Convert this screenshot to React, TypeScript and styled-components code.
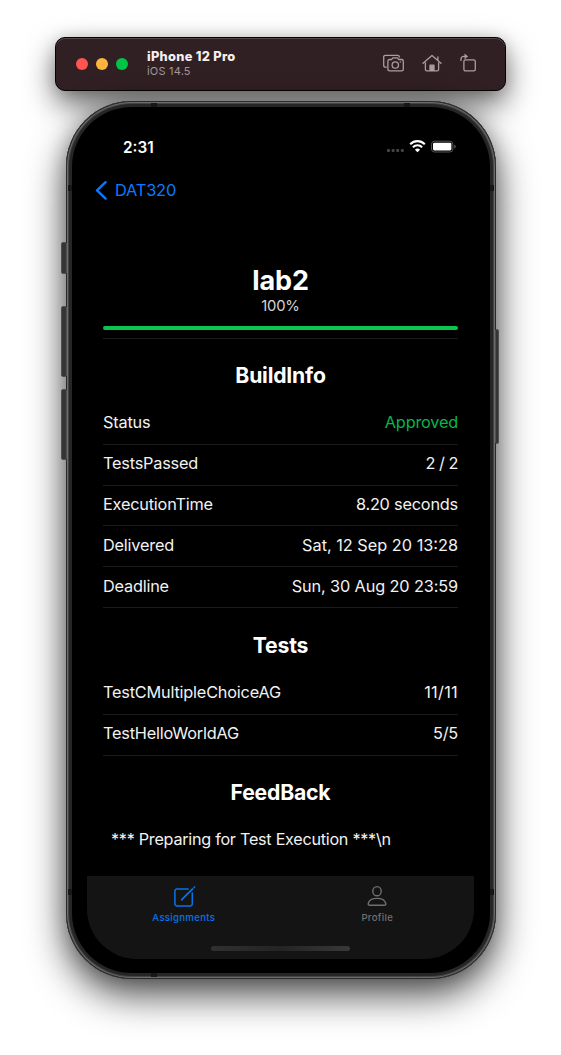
import React from "react";
import styled, { createGlobalStyle } from "styled-components";

const GlobalStyle = createGlobalStyle`
  * { box-sizing: border-box; }
  html, body { margin: 0; background: #fff; }
  body {
    font-family: Inter, "Liberation Sans", sans-serif;
    overflow: hidden;
    -webkit-font-smoothing: antialiased;
  }
`;

const Desktop = styled.div`
  width: 561px;
  height: 1055px;
  padding: 37px 55px 0;
  background: #fff;
  display: flex;
  flex-direction: column;
  gap: 10px;
  overflow: hidden;
`;

const TitleBar = styled.header`
  width: 451px;
  height: 54px;
  padding: 0 27px 0 20px;
  display: flex;
  align-items: center;
  background: #302024;
  border: 1px solid #050304;
  border-radius: 10px;
  box-shadow: inset 0 1px 0 #55484b, 0 13px 30px rgba(0, 0, 0, 0.6), 0 0 14px rgba(0, 0, 0, 0.12);
`;

const Lights = styled.div`
  display: flex;
  gap: 8px;
`;

const Light = styled.span<{ $color: string }>`
  width: 12px;
  height: 12px;
  border-radius: 50%;
  background: ${(p) => p.$color};
`;

const Device = styled.div`
  margin-left: 19px;
  flex: 1;
`;

const DeviceName = styled.div`
  font-size: 12.8px;
  font-weight: 800;
  line-height: 15px;
  letter-spacing: 0.3px;
  color: #f4eff0;
`;

const DeviceOs = styled.div`
  font-size: 11px;
  line-height: 15px;
  letter-spacing: 0.2px;
  color: #a3989a;
`;

const Tools = styled.div`
  display: flex;
  align-items: center;
  gap: 18px;
  padding-bottom: 2px;
`;

const Phone = styled.main`
  position: relative;
  width: 430px;
  height: 878px;
  margin-left: 11px;
  padding: 20px 22px 20px 21px;
  border-radius: 66px;
  background: #000;
  box-shadow: inset 0 0 0 1px #2a2a2a, inset 0 0 0 2px #6c6c6c, inset 0 0 0 3px #444,
    inset 0 0 0 6px #262626, 0 16px 38px rgba(0, 0, 0, 0.7), 0 0 20px rgba(0, 0, 0, 0.2);
`;

const SideButton = styled.span<{ $top: number; $height: number; $right?: boolean }>`
  position: absolute;
  top: ${(p) => p.$top}px;
  ${(p) => (p.$right ? "right: -3px;" : "left: -5px;")}
  width: ${(p) => (p.$right ? 4 : 6)}px;
  height: ${(p) => p.$height}px;
  background: #353535;
  border: 1px solid #505050;
  border-radius: 2px;
`;

const AntennaBand = styled.span<{ $edge: "left" | "right" | "top" | "bottom"; $at: number }>`
  position: absolute;
  ${(p) => p.$edge}: 2px;
  ${(p) =>
    p.$edge === "left" || p.$edge === "right"
      ? `top: ${p.$at}px; width: 4px; height: 6px;`
      : `left: ${p.$at}px; width: 6px; height: 4px;`}
  background: #171717;
`;

const Screen = styled.div`
  width: 387px;
  height: 838px;
  border-radius: 0 0 50px 50px;
  overflow: hidden;
  display: flex;
  flex-direction: column;
`;

const StatusBar = styled.div`
  height: 50px;
  padding: 1px 18px 0 36px;
  display: flex;
  align-items: center;
  justify-content: space-between;
`;

const Clock = styled.span`
  padding-top: 1px;
  font-size: 15.3px;
  font-weight: 600;
  letter-spacing: 0;
  color: #fff;
`;

const NavBar = styled.nav`
  height: 38px;
  padding: 0 0 0 8px;
  display: flex;
  align-items: center;
  gap: 7px;
  color: #0a7aff;
  font-size: 16.4px;
  letter-spacing: -0.2px;
`;

const Content = styled.section`
  flex: 1;
  padding: 55px 16px 0;
  color: #f2f2f2;
`;

const Title = styled.h1`
  margin: 0;
  height: 33px;
  line-height: 33px;
  font-size: 27px;
  font-weight: 700;
  letter-spacing: -0.1px;
  text-align: center;
  color: #fff;
`;

const Percent = styled.div`
  height: 19px;
  line-height: 19px;
  font-size: 14.8px;
  letter-spacing: -0.2px;
  text-align: center;
  color: #d4d4d4;
`;

const Progress = styled.div`
  height: 4px;
  margin-top: 10px;
  border-radius: 2px;
  background: #08c650;
`;

const Divider = styled.div`
  height: 1px;
  margin-top: 8px;
  background: #1b1b1b;
`;

const SectionTitle = styled.h2<{ $offset?: number; $height?: number }>`
  margin: 0;
  height: ${(p) => p.$height ?? 65}px;
  padding-top: ${(p) => p.$offset ?? 22}px;
  line-height: 28px;
  font-size: 21.2px;
  font-weight: 650;
  letter-spacing: -0.2px;
  text-align: center;
  color: #fff;
`;

const Row = styled.div`
  height: 40.8px;
  padding-bottom: 3px;
  display: flex;
  align-items: center;
  justify-content: space-between;
  border-bottom: 1px solid #1b1b1b;
  font-size: 16.3px;
  letter-spacing: -0.2px;
`;

const Value = styled.span<{ $approved?: boolean; $tracking?: number }>`
  letter-spacing: ${(p) => p.$tracking ?? -0.2}px;
  color: ${(p) => (p.$approved ? "#08b64b" : "inherit")};
`;

const Feedback = styled.p`
  margin: 8px 0 0 8px;
  line-height: 20px;
  font-size: 16.2px;
  letter-spacing: -0.27px;
  white-space: pre;
`;

const TabBar = styled.footer`
  height: 83px;
  background: #141414;
  display: flex;
  flex-direction: column;
  align-items: center;
`;

const Tabs = styled.div`
  width: 100%;
  height: 70px;
  display: grid;
  grid-template-columns: 1fr 1fr;
`;

const Tab = styled.div<{ $active?: boolean }>`
  padding-top: 8px;
  display: flex;
  flex-direction: column;
  align-items: center;
  gap: 3px;
  font-size: 9.6px;
  line-height: 13px;
  font-weight: 500;
  letter-spacing: 0.3px;
  color: ${(p) => (p.$active ? "#0873e9" : "#707070")};
`;

const HomeIndicator = styled.div`
  width: 139px;
  height: 5px;
  border-radius: 3px;
  background: linear-gradient(90deg, #303030, #242424 50%, #383838);
`;

const ScreenshotIcon = () => (
  <svg width="22" height="20" viewBox="0 0 22 20" fill="none" stroke="#aa9c9f" strokeWidth="1.3" strokeLinecap="round" strokeLinejoin="round">
    <path d="M4.2 14.2H3.4a1.7 1.7 0 0 1-1.7-1.7V4a1.7 1.7 0 0 1 1.7-1.7h12.2A1.7 1.7 0 0 1 17.3 4" />
    <path d="M7.6 6.5h2.1l1.2-1.7h4.5l1.2 1.7h3a1.7 1.7 0 0 1 1.7 1.7v8a1.7 1.7 0 0 1-1.7 1.7h-12a1.7 1.7 0 0 1-1.7-1.7v-8a1.7 1.7 0 0 1 1.7-1.7z" />
    <circle cx="13.3" cy="12" r="3.2" />
    <path d="M18.3 8.9h.2" />
  </svg>
);

const HouseIcon = () => (
  <svg width="20" height="20" viewBox="0 0 20 20" fill="none" stroke="#aa9c9f" strokeWidth="1.3" strokeLinecap="round" strokeLinejoin="round">
    <path d="M1 10.2 10 2.4l9 7.8M15.9 7.2V3.8M3.4 9.8v6.7a1.4 1.4 0 0 0 1.4 1.4h10.4a1.4 1.4 0 0 0 1.4-1.4V9.8" />
    <path d="M8 17.4v-5.2h4v5.2z" fill="#aa9c9f" />
  </svg>
);

const RotateIcon = () => (
  <svg width="18" height="20" viewBox="0 0 18 20" fill="none" stroke="#aa9c9f" strokeWidth="1.3" strokeLinecap="round" strokeLinejoin="round">
    <rect x="3.9" y="6.9" width="11.4" height="11" rx="1.6" />
    <path d="M.9 7.4V6.5c0-2 1.2-3.1 3-3.1h3" />
    <path d="m5.1 1.3 2.4 2.1-2.4 2.1z" fill="#aa9c9f" strokeWidth=".7" />
  </svg>
);

const StatusIcons = () => (
  <svg width="69" height="14" viewBox="0 0 69 14">
    <g fill="#444">
      <rect x="0" y="9" width="3" height="3" rx="1" />
      <rect x="4.6" y="9" width="3" height="3" rx="1" />
      <rect x="9.2" y="9" width="3" height="3" rx="1" />
      <rect x="13.8" y="9" width="3" height="3" rx="1" />
    </g>
    <g fill="none" stroke="#fff" strokeWidth="2.1">
      <path d="M23.2 4.2a10.3 10.3 0 0 1 14.6 0" />
      <path d="M25.9 7.2a6.5 6.5 0 0 1 9.2 0" />
    </g>
    <path d="M30.5 12.3 27.9 9.7a3.7 3.7 0 0 1 5.2 0z" fill="#fff" />
    <rect x="44.5" y="1.2" width="21.4" height="10.8" rx="3" fill="none" stroke="#555" />
    <rect x="46" y="2.7" width="18.4" height="7.8" rx="1.4" fill="#fff" />
    <path d="M67.2 4.8c1.2.4 1.6 1 1.6 1.8s-.4 1.4-1.6 1.8z" fill="#555" />
  </svg>
);

const BackIcon = () => (
  <svg width="13" height="20" viewBox="0 0 13 20" fill="none" stroke="currentColor" strokeWidth="2.3" strokeLinecap="round" strokeLinejoin="round">
    <path d="M10.6 2.2 2 10.4l8.6 8.2" />
  </svg>
);

const ComposeIcon = () => (
  <svg width="24" height="24" viewBox="0 0 24 24" fill="none" stroke="currentColor" strokeWidth="1.5" strokeLinecap="round" strokeLinejoin="round">
    <path d="M16.2 4.9H5.1a2.2 2.2 0 0 0-2.2 2.2v12.6a2.2 2.2 0 0 0 2.2 2.2h13a2.2 2.2 0 0 0 2.2-2.2V9" />
    <path d="M10.2 15.2 20.6 4.9M22.2 3.3l.2-.2" strokeWidth="1.8" />
    <path d="m9.5 15.9.9-.3" />
  </svg>
);

const PersonIcon = () => (
  <svg width="24" height="24" viewBox="0 0 24 24" fill="none" stroke="currentColor" strokeWidth="1.4" strokeLinejoin="round">
    <ellipse cx="12" cy="7.2" rx="4.2" ry="4.6" />
    <path d="M4.9 21.2c-1.4 0-2-.7-1.6-2 .8-2.8 4.2-4.8 8.7-4.8s7.9 2 8.7 4.8c.4 1.3-.2 2-1.6 2z" />
  </svg>
);

type Entry = { label: string; value: string; tracking?: number };

const buildInfo: Entry[] = [
  { label: "Status", value: "Approved" },
  { label: "TestsPassed", value: "2 / 2", tracking: -0.5 },
  { label: "ExecutionTime", value: "8.20 seconds" },
  { label: "Delivered", value: "Sat, 12 Sep 20 13:28", tracking: 0 },
  { label: "Deadline", value: "Sun, 30 Aug 20 23:59", tracking: -0.12 },
];

const tests: Entry[] = [
  { label: "TestCMultipleChoiceAG", value: "11/11", tracking: 0.3 },
  { label: "TestHelloWorldAG", value: "5/5" },
];

const InfoRows = ({ rows }: { rows: Entry[] }) => (
  <>
    {rows.map(({ label, value, tracking }) => (
      <Row key={label}>
        <span>{label}</span>
        <Value $approved={value === "Approved"} $tracking={tracking}>{value}</Value>
      </Row>
    ))}
  </>
);

export default function App() {
  return (
    <>
      <GlobalStyle />
      <Desktop>
        <TitleBar>
          <Lights>
            <Light $color="#ff5450" />
            <Light $color="#ffb53b" />
            <Light $color="#00c445" />
          </Lights>
          <Device>
            <DeviceName>iPhone 12 Pro</DeviceName>
            <DeviceOs>iOS 14.5</DeviceOs>
          </Device>
          <Tools>
            <ScreenshotIcon />
            <HouseIcon />
            <RotateIcon />
          </Tools>
        </TitleBar>
        <Phone>
          <SideButton $top={141} $height={32} />
          <SideButton $top={205} $height={71} />
          <SideButton $top={288} $height={71} />
          <SideButton $top={228} $height={115} $right />
          <AntennaBand $edge="left" $at={84} />
          <AntennaBand $edge="right" $at={84} />
          <AntennaBand $edge="left" $at={788} />
          <AntennaBand $edge="right" $at={788} />
          <AntennaBand $edge="top" $at={85} />
          <AntennaBand $edge="top" $at={338} />
          <AntennaBand $edge="bottom" $at={85} />
          <Screen>
            <StatusBar>
              <Clock>2:31</Clock>
              <StatusIcons />
            </StatusBar>
            <NavBar>
              <BackIcon />
              <span>DAT320</span>
            </NavBar>
            <Content>
              <Title>lab2</Title>
              <Percent>100%</Percent>
              <Progress />
              <Divider />
              <SectionTitle>BuildInfo</SectionTitle>
              <InfoRows rows={buildInfo} />
              <SectionTitle $offset={23} $height={66}>Tests</SectionTitle>
              <InfoRows rows={tests} />
              <SectionTitle>FeedBack</SectionTitle>
              <Feedback>{"*** Preparing for Test Execution ***\\n"}</Feedback>
            </Content>
            <TabBar>
              <Tabs>
                <Tab $active>
                  <ComposeIcon />
                  <span>Assignments</span>
                </Tab>
                <Tab>
                  <PersonIcon />
                  <span>Profile</span>
                </Tab>
              </Tabs>
              <HomeIndicator />
            </TabBar>
          </Screen>
        </Phone>
      </Desktop>
    </>
  );
}
